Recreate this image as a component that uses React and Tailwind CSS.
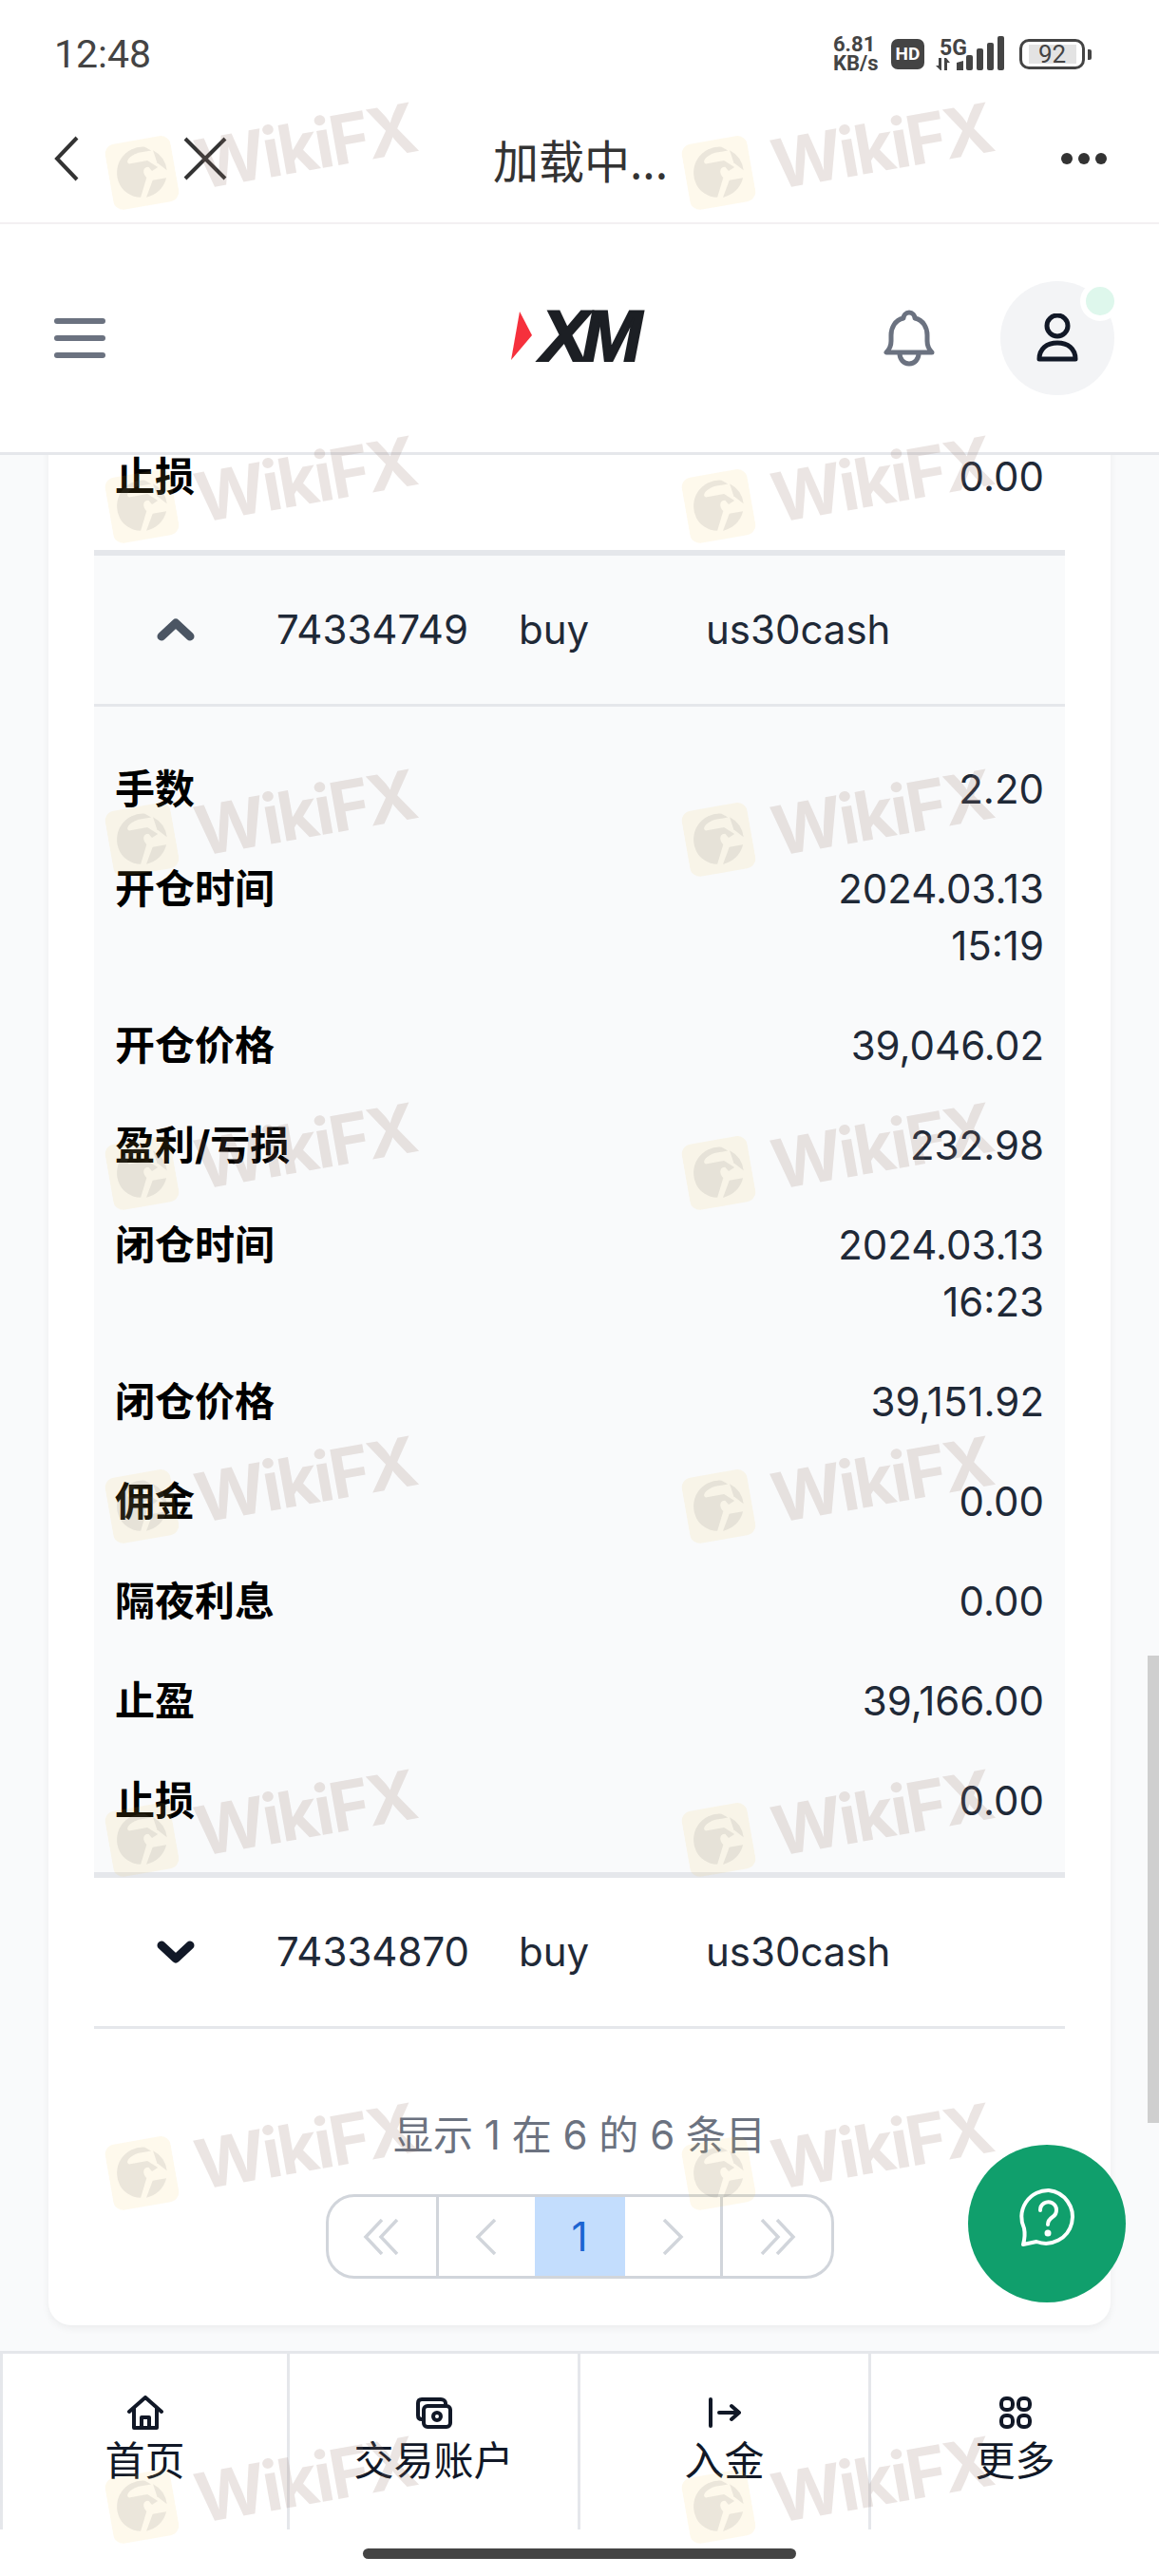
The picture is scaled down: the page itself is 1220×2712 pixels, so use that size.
import React from 'react';

const FONT = "font-['Inter','Noto_Sans_CJK_SC',sans-serif]";

const ROWS = [
  { label: '手数', value: ['2.20'] },
  { label: '开仓时间', value: ['2024.03.13', '15:19'] },
  { label: '开仓价格', value: ['39,046.02'] },
  { label: '盈利/亏损', value: ['232.98'] },
  { label: '闭仓时间', value: ['2024.03.13', '16:23'] },
  { label: '闭仓价格', value: ['39,151.92'] },
  { label: '佣金', value: ['0.00'] },
  { label: '隔夜利息', value: ['0.00'] },
  { label: '止盈', value: ['39,166.00'] },
  { label: '止损', value: ['0.00'] },
];

const WATERMARKS = Array.from({ length: 16 }, (_, i) => i);

function DetailRow({ label, value }) {
  return (
    <div className="flex justify-between px-[22px] py-[22.5px] text-[42px] leading-[60px]">
      <span className="font-bold text-black">{label}</span>
      <span className="text-right text-[#1f2937]">
        {value.map((line) => (
          <div key={line}>{line}</div>
        ))}
      </span>
    </div>
  );
}

function TradeHead({ open, id }) {
  return (
    <div className={`grid h-[156px] grid-cols-[192px_255px_197px_1fr] items-center text-[42px] leading-[60px] text-[#1f2937] ${open ? 'bg-[#f9fafb]' : 'bg-white'}`}>
      <span className="pl-[66px]">
        <svg width="40" height="26" viewBox="0 0 40 26" fill="none" stroke={open ? '#4b5563' : '#111827'} strokeWidth="9" strokeLinecap="round" strokeLinejoin="round">
          <path d={open ? 'M5 20L20 6L35 20' : 'M5 6L20 20L35 6'} />
        </svg>
      </span>
      <span>{id}</span>
      <span>buy</span>
      <span>us30cash</span>
    </div>
  );
}

function Watermark() {
  return (
    <div className="flex h-[351px] w-[607px] items-start">
      <div className="flex origin-left -rotate-[10deg] items-center">
        <svg width="70" height="72" viewBox="0 0 72 72" className="shrink-0">
          <rect width="72" height="72" rx="11" fill="#f7c948" fillOpacity="0.1" />
          <path d="M10 44A28 28 0 0 1 44 9L50 14H36C24 16 20 22 24 24H44L54 33L47 36L44 31C38 30 36 36 40 42L30 62C20 60 12 52 10 44Z" fill="#6e6e6e" fillOpacity="0.13" />
          <path d="M52 14A28 28 0 0 1 63 38L54 28Z" fill="#6e6e6e" fillOpacity="0.13" />
          <path d="M36 63L46 46L61 46A28 28 0 0 1 36 63Z" fill="#6e6e6e" fillOpacity="0.13" />
        </svg>
        <span className="ml-[22px] mt-[4px] font-['Inter',sans-serif] text-[72px] font-bold leading-none tracking-[-3px] text-[#8e6e64]/[.18]">WikiFX</span>
      </div>
    </div>
  );
}

function StatusBar() {
  return (
    <div className="flex h-[100px] shrink-0 items-center justify-between pl-[57px] pr-[71px] pt-[14px] font-['Roboto',sans-serif] text-[#444]">
      <span className="text-[41px] leading-none">12:48</span>
      <div className="flex items-center">
        <div className="w-[52px] text-[22px] font-bold leading-[20px]">
          <div>6.81</div>
          <div>KB/s</div>
        </div>
        <div className="ml-[9px] flex h-[32px] w-[35px] items-center justify-center rounded-[7px] bg-[#444] text-[19px] font-bold text-white">HD</div>
        <div className="ml-[12px] w-[32px]">
          <div className="pl-[4px] text-[23px] font-bold leading-[21px]">5G</div>
          <svg width="32" height="14" viewBox="0 0 32 14" fill="#444" className="block">
            <path d="M3 0h3v13H5L0 8h3zM9 0h2l4 5h-3v8H9z" />
            <path d="M22 5v8h7V3z" />
          </svg>
        </div>
        <svg width="42" height="38" viewBox="0 0 42 38" fill="#444" className="mt-[-1px]">
          <rect x="0" y="20" width="7" height="16" rx="2" />
          <rect x="11" y="13" width="7" height="23" rx="2" />
          <rect x="22" y="7" width="7" height="29" rx="2" />
          <rect x="33" y="0" width="7" height="36" rx="2" />
        </svg>
        <div className="ml-[14px] flex h-[32px] w-[69px] items-center justify-center rounded-[10px] border-[3px] border-[#444]">
          <span className="flex h-[20px] w-[50px] items-center justify-center bg-[#e3e3e3] text-[26px] font-normal">92</span>
        </div>
        <div className="ml-[3px] h-[11px] w-[4px] rounded-r-[2px] bg-[#444]" />
      </div>
    </div>
  );
}

function WebBar() {
  return (
    <div className="grid h-[136px] shrink-0 grid-cols-[1fr_auto_1fr] items-center border-b-2 border-[#f3f0f2] pl-[57px] pr-[55px]">
      <div className="flex items-center">
        <svg width="26" height="48" viewBox="0 0 26 48" fill="none" stroke="#333" strokeWidth="4">
          <path d="M24 2L3 24L24 46" />
        </svg>
        <svg width="46" height="46" viewBox="0 0 46 46" fill="none" stroke="#333" strokeWidth="4" className="ml-[110px]">
          <path d="M2 2L44 44M44 2L2 44" />
        </svg>
      </div>
      <span className="font-['Noto_Sans_CJK_SC',sans-serif] text-[48px] leading-none text-[#333]">加载中...</span>
      <div className="flex justify-end gap-[6px]">
        <span className="h-[12px] w-[12px] rounded-full bg-[#333]" />
        <span className="h-[12px] w-[12px] rounded-full bg-[#333]" />
        <span className="h-[12px] w-[12px] rounded-full bg-[#333]" />
      </div>
    </div>
  );
}

function AppHeader() {
  return (
    <div className="grid h-[243px] shrink-0 grid-cols-[1fr_auto_1fr] items-center border-b-[3px] border-[#e5e7eb] bg-white pl-[57px] pr-[47px]">
      <div className="flex w-[54px] flex-col gap-[12px]">
        <span className="h-[6px] rounded-full bg-[#6b7280]" />
        <span className="h-[6px] rounded-full bg-[#6b7280]" />
        <span className="h-[6px] rounded-full bg-[#6b7280]" />
      </div>
      <div className="mb-[4px] mr-[24px] flex items-center">
        <svg width="24" height="52" viewBox="0 0 24 52" className="shrink-0">
          <path d="M10 0L23 25L1 51Z" fill="#f6303c" />
        </svg>
        <span className="ml-[8px] font-['Liberation_Sans',sans-serif] text-[76px] font-bold italic leading-none tracking-[-7px] text-[#1c1f24] [-webkit-text-stroke:2px_#1c1f24]">XM</span>
      </div>
      <div className="flex items-center justify-end gap-[69px]">
        <svg width="54" height="60" viewBox="0 0 54 60" fill="none" stroke="#6b7280" strokeWidth="5" strokeLinejoin="round" strokeLinecap="round">
          <path d="M27 3C23.500 3 21 6 21 9C12 11 8 19 8 27V33C8 38 6 42 3 45H51C48 42 46 38 46 33V27C46 19 42 11 33 9C33 6 30.500 3 27 3Z" />
          <path d="M17 46C17 52 21 57 27 57C33 57 37 52 37 46" />
        </svg>
        <div className="relative flex h-[120px] w-[120px] items-center justify-center rounded-full bg-[#f3f4f6]">
          <svg width="44" height="52" viewBox="0 0 44 52" fill="none" stroke="#111827" strokeWidth="5" strokeLinejoin="round">
            <circle cx="22" cy="13" r="11" />
            <path d="M3 48C3 37 11 31 22 31C33 31 41 37 41 48Z" />
          </svg>
          <span className="absolute right-[-6px] top-[0px] h-[42px] w-[42px] rounded-full border-[6px] border-white bg-[#def7ec]" />
        </div>
      </div>
    </div>
  );
}

function Pagination() {
  return (
    <div className="mx-auto mt-[32px] flex h-[89px] w-[535px] overflow-hidden rounded-[30px] border-[3px] border-[#d1d5db]">
      <div className="flex w-[116px] items-center justify-center border-r-[3px] border-[#d1d5db]">
        <svg width="40" height="38" viewBox="0 0 40 38" fill="none" stroke="#d1d5db" strokeWidth="3.500">
          <path d="M20 1L3 19L20 37M36 1L19 19L36 37" />
        </svg>
      </div>
      <div className="flex w-[101px] items-center justify-center">
        <svg width="24" height="38" viewBox="0 0 24 38" fill="none" stroke="#d1d5db" strokeWidth="3.500">
          <path d="M21 1L3 19L21 37" />
        </svg>
      </div>
      <div className="flex w-[95px] items-center justify-center bg-[#c3ddfd] text-[42px] text-[#1c64d2]">1</div>
      <div className="flex w-[103px] items-center justify-center border-r-[3px] border-[#d1d5db]">
        <svg width="24" height="38" viewBox="0 0 24 38" fill="none" stroke="#d1d5db" strokeWidth="3.500">
          <path d="M3 1L21 19L3 37" />
        </svg>
      </div>
      <div className="flex flex-1 items-center justify-center">
        <svg width="40" height="38" viewBox="0 0 40 38" fill="none" stroke="#d1d5db" strokeWidth="3.500">
          <path d="M4 1L21 19L4 37M20 1L37 19L20 37" />
        </svg>
      </div>
    </div>
  );
}

function BottomNav() {
  const stroke = { fill: 'none', stroke: '#111827', strokeWidth: 4, strokeLinecap: 'round', strokeLinejoin: 'round' };
  return (
    <div className="h-[237px] shrink-0 bg-white">
      <div className="grid h-[188px] grid-cols-[302px_306px_306px_306px] border-t-[3px] border-[#e5e7eb] text-[42px] leading-[50px] text-[#111827]">
        <div className="flex flex-col items-center border-l-[3px] border-[#e5e7eb] pt-[44px]">
          <svg width="38" height="36" viewBox="0 0 38 36" {...stroke}>
            <path d="M2 17L19 2L36 17M7 13V34H31V13M15 34V23H23V34" />
          </svg>
          <span className="mt-[8px]">首页</span>
        </div>
        <div className="flex flex-col items-center border-l-[3px] border-[#e5e7eb] pt-[44px]">
          <svg width="38" height="36" viewBox="0 0 38 36" {...stroke}>
            <path d="M8 25H6C3 25 2 23 2 21V8C2 5 4 4 6 4H26C29 4 31 6 31 8V11" />
            <rect x="8" y="11" width="28" height="22" rx="4" />
            <circle cx="22" cy="22" r="4" />
          </svg>
          <span className="mt-[8px]">交易账户</span>
        </div>
        <div className="flex flex-col items-center border-l-[3px] border-[#e5e7eb] pt-[44px]">
          <svg width="36" height="36" viewBox="0 0 36 36" {...stroke}>
            <path d="M3 4V32M12 18H33M25 11L33 18L25 25" />
          </svg>
          <span className="mt-[8px]">入金</span>
        </div>
        <div className="flex flex-col items-center border-l-[3px] border-[#e5e7eb] pt-[44px]">
          <svg width="36" height="36" viewBox="0 0 36 36" {...stroke}>
            <rect x="3" y="3" width="12" height="12" rx="5" />
            <rect x="21" y="3" width="12" height="12" rx="5" />
            <rect x="3" y="21" width="12" height="12" rx="5" />
            <rect x="21" y="21" width="12" height="12" rx="5" />
          </svg>
          <span className="mt-[8px]">更多</span>
        </div>
      </div>
      <div className="mx-auto mt-[20px] h-[11px] w-[456px] rounded-full bg-[#444]" />
    </div>
  );
}

export default function App() {
  return (
    <div className={`relative flex h-[2712px] w-[1220px] flex-col overflow-hidden bg-white ${FONT}`}>
      <StatusBar />
      <WebBar />
      <AppHeader />

      <main className="min-h-0 flex-1 overflow-hidden bg-[#f9fafb] px-[51px]">
        <div className="-mt-[30px] rounded-[24px] bg-white px-[48px] pb-[49px] shadow-[0_3px_8px_rgba(0,0,0,0.06)]">
          <div className="pb-[25px]">
            <DetailRow label="止损" value={['0.00']} />
          </div>
          <div className="border-t-[6px] border-[#e5e7eb]">
            <TradeHead open id="74334749" />
          </div>
          <div className="border-t-[3px] border-[#e5e7eb] bg-[#f9fafb] pb-[23px] pt-[34px]">
            {ROWS.map((row) => (
              <DetailRow key={row.label} label={row.label} value={row.value} />
            ))}
          </div>
          <div className="border-b-[3px] border-t-[6px] border-[#e5e7eb]">
            <TradeHead id="74334870" />
          </div>
          <p className="pt-[82px] text-center text-[42px] leading-[60px] text-[#6b7280]">显示 1 在 6 的 6 条目</p>
          <Pagination />
        </div>
      </main>

      <BottomNav />

      {/* scrollbar + help button sit over the page */}
      <div className="absolute right-0 top-[1743px] h-[492px] w-[12px] bg-[#cfcfcf]" />
      <div className="absolute left-[1019px] top-[2258px] flex h-[166px] w-[166px] items-center justify-center rounded-full bg-[#109f6c]">
        <svg width="64" height="64" viewBox="0 0 64 64" fill="none" stroke="white" strokeWidth="4" strokeLinecap="round" strokeLinejoin="round" className="-translate-y-[6px]">
          <path d="M34 3A28 28 0 1 1 21 57L7 60C9 53 9 48 8 43A28 28 0 0 1 34 3Z" />
          <path d="M25 24A8.500 8.500 0 1 1 38 31C35 33 33 35 33 39" />
          <circle cx="33" cy="48" r="1.500" fill="white" />
        </svg>
      </div>

      {/* WikiFX watermark tiles over the whole page */}
      <div className="pointer-events-none absolute inset-0 grid auto-rows-[351px] grid-cols-[607px_607px] pl-[115px] pt-[150px]">
        {WATERMARKS.map((i) => (
          <Watermark key={i} />
        ))}
      </div>
    </div>
  );
}
